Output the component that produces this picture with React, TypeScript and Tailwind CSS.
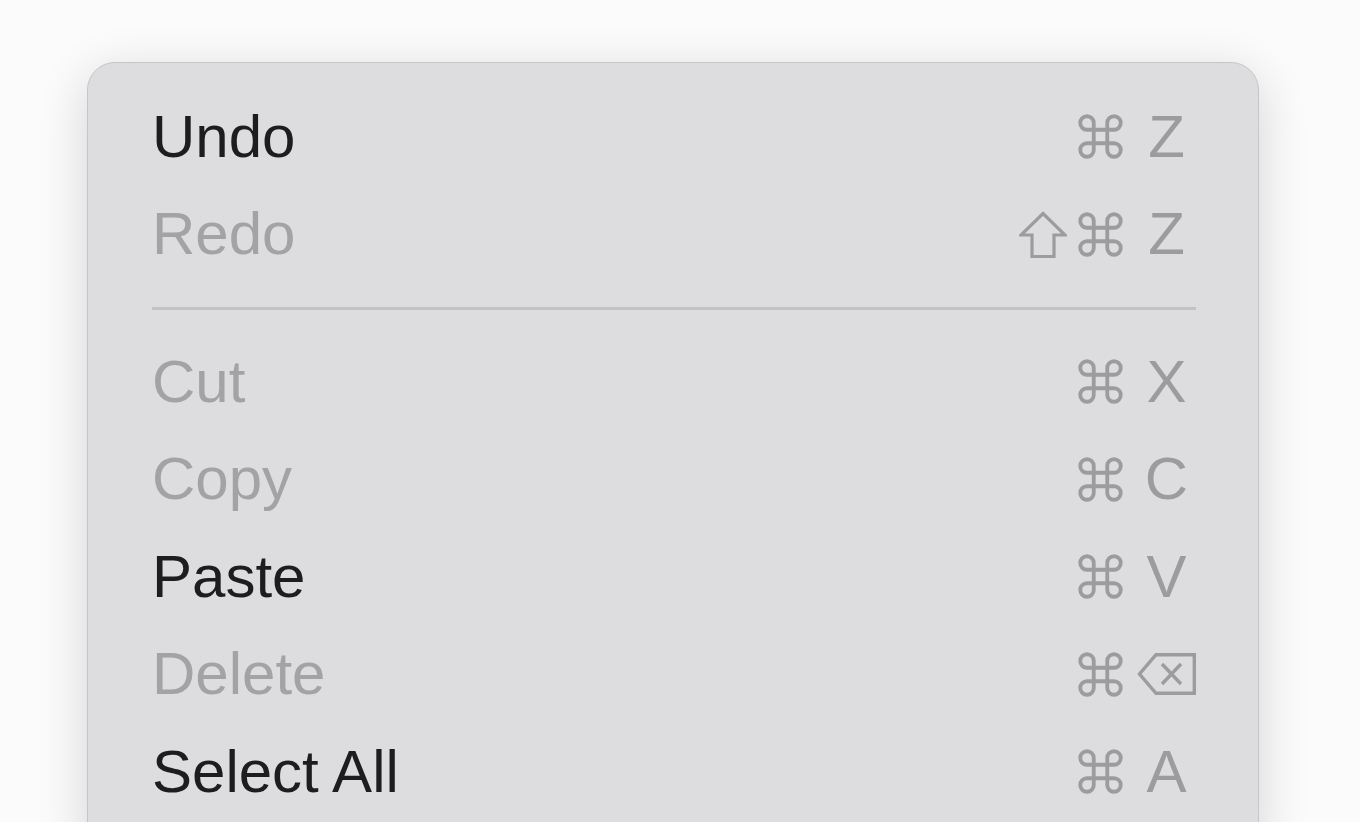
// Edit context menu (macOS style), shown enlarged
import type { ReactNode } from "react";

interface MenuItem {
  label: string;
  enabled: boolean;
  shift?: boolean;
  keyChar?: string;
  deleteKey?: boolean;
}

const groups: MenuItem[][] = [
  [
    { label: "Undo", enabled: true, keyChar: "Z" },
    { label: "Redo", enabled: false, shift: true, keyChar: "Z" },
  ],
  [
    { label: "Cut", enabled: false, keyChar: "X" },
    { label: "Copy", enabled: false, keyChar: "C" },
    { label: "Paste", enabled: true, keyChar: "V" },
    { label: "Delete", enabled: false, deleteKey: true },
    { label: "Select All", enabled: true, keyChar: "A" },
  ],
];

const CommandGlyph = () => (
  <svg width="45" height="45" viewBox="2 2 20 20" fill="none" stroke="currentColor" strokeWidth="1.7" strokeLinejoin="round">
    <path d="M15 6v12a3 3 0 1 0 3-3H6a3 3 0 1 0 3 3V6a3 3 0 1 0-3 3h12a3 3 0 1 0-3-3" />
  </svg>
);

const ShiftGlyph = () => (
  <svg width="48" height="47" viewBox="0 0 48 47" fill="none" stroke="currentColor" strokeWidth="3.2" strokeLinejoin="miter">
    <path d="M24 2.5 L46 24 H35 V45.5 H13 V24 H2 Z" />
  </svg>
);

const DeleteGlyph = () => (
  <svg width="59" height="42" viewBox="0 0 59 42" fill="none" stroke="currentColor" strokeWidth="3.4">
    <path d="M57.3 1.7 H19 L2.5 21 L19 40.3 H57.3 Z" strokeLinejoin="miter" />
    <path d="M25 11 L44 31 M44 11 L25 31" strokeLinecap="butt" />
  </svg>
);

function Row({ item }: { item: MenuItem }) {
  let keySlot: ReactNode = null;
  if (item.deleteKey) keySlot = <DeleteGlyph />;
  else keySlot = <span className="leading-none">{item.keyChar}</span>;

  return (
    <div className="flex h-[97.5px] items-center justify-between pl-[64px] pr-[62px]">
      <span className={`leading-none ${item.enabled ? "text-[#1d1d1f]" : "text-[#a3a3a5]"}`}>{item.label}</span>
      <div className="flex items-center text-[#9c9c9e]">
        <div className="flex items-center gap-[11px]">
          {item.shift && <ShiftGlyph />}
          <CommandGlyph />
        </div>
        <div className="ml-[14px] flex w-[59px] justify-center">{keySlot}</div>
      </div>
    </div>
  );
}

export default function App() {
  return (
    <div className="h-[822px] w-[1360px] overflow-hidden bg-[#fbfbfb]">
      <div className="pl-[87px] pt-[62px]">
        <div
          className="w-[1172px] rounded-[28px] border-[1.5px] border-[#c6c6c8] bg-[#dddddf] pb-[30px] pt-[25px] text-[60px] shadow-[0_12px_50px_rgba(0,0,0,0.16)]"
          style={{ fontFamily: '"Liberation Sans", Arial, sans-serif' }}
        >
          {groups.map((group, gi) => (
            <div key={gi}>
              {gi > 0 && (
                <div className="flex h-[50px] items-center pl-[64px] pr-[62px]">
                  <div className="h-[3px] w-full bg-[#c2c2c4]" />
                </div>
              )}
              {group.map((item) => (
                <Row key={item.label} item={item} />
              ))}
            </div>
          ))}
        </div>
      </div>
    </div>
  );
}
